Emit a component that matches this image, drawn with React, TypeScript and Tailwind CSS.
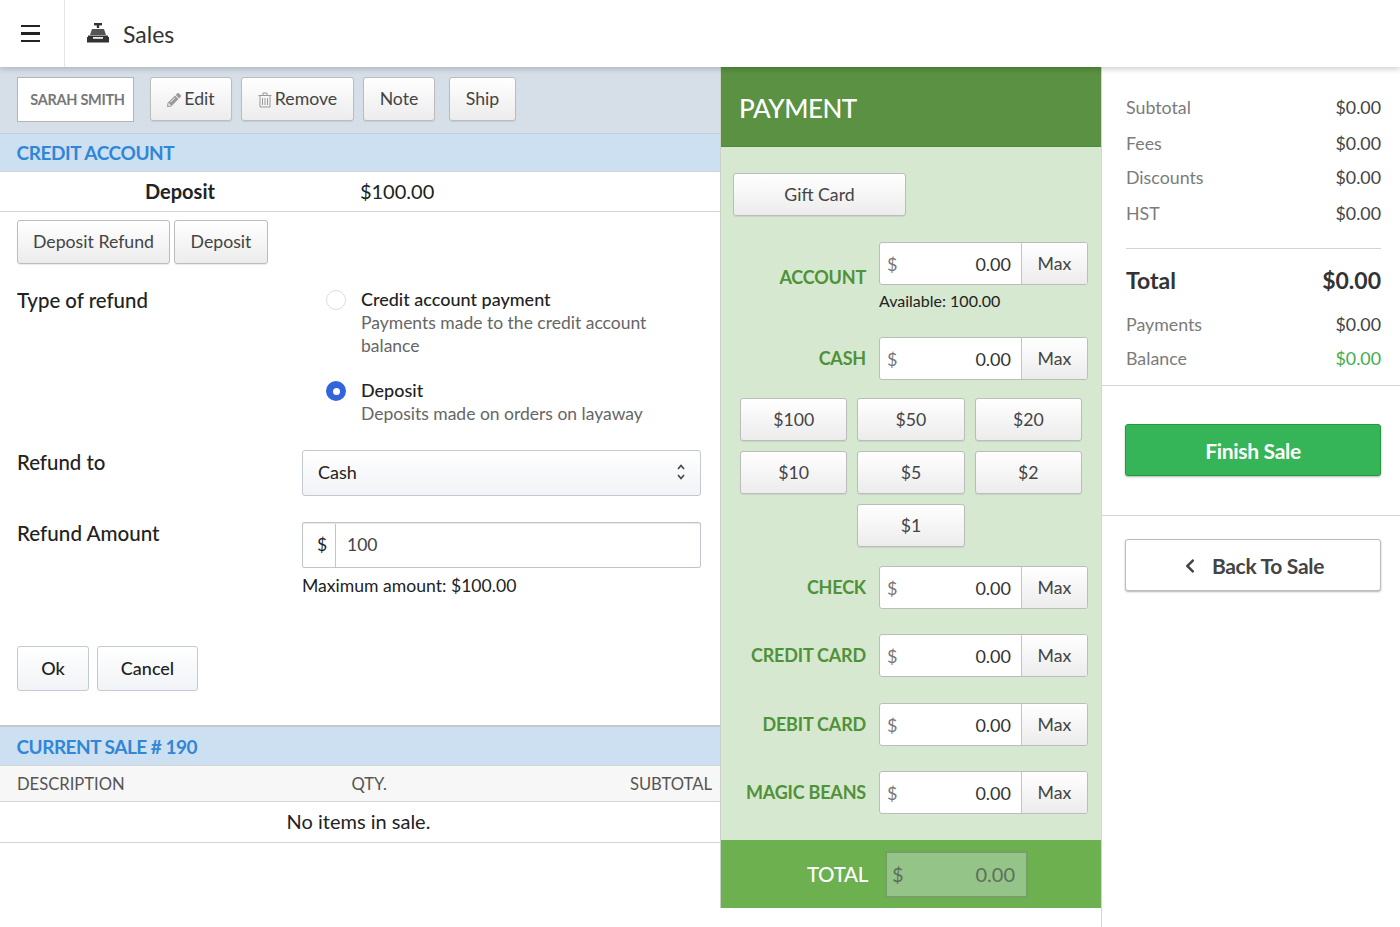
import { FaChevronLeft, FaPencilAlt } from "react-icons/fa";

const cashButtons = ["$100", "$50", "$20", "$10", "$5", "$2"];

const btn =
  "flex items-center justify-center rounded-[3px] border border-[#bcbcbc] bg-linear-to-b from-white to-[#ececec] pt-[1px] text-[17.7px] text-[#444] shadow-[0_1px_1px_rgba(0,0,0,0.08)]";

function CashRegister() {
  return (
    <svg width="22" height="20" viewBox="0 0 22 20" fill="#333">
      <rect x="7" y="0" width="8" height="2.4" />
      <rect x="9.8" y="2" width="2.4" height="3" />
      <path d="M5 6 h12 l2 6 H3 Z" fill="#555" />
      <rect x="1" y="12.5" width="20" height="1.6" />
      <path d="M0 14 h6 v1.8 h10 V14 h6 v5.5 H0 Z" />
    </svg>
  );
}

function TrashIcon() {
  return (
    <svg width="14" height="16" viewBox="0 0 14 16" fill="none" stroke="#9a9a9a" strokeWidth="1">
      <path d="M0.5 3.5 h13" />
      <path d="M5 3 V1 h4 v2" />
      <path d="M2 4 v11 h10 V4" />
      <path d="M4.5 6 v7 M7 6 v7 M9.5 6 v7" />
    </svg>
  );
}

function SectionHeader({ title, className = "" }: { title: string; className?: string }) {
  return (
    <div className={`flex items-center bg-[#cce0f2] pl-[16.5px] text-[19px] font-bold text-[#3186d6] ${className}`}>
      {title}
    </div>
  );
}

function PayInput({ label, className = "", labelClass = "" }: { label: string; className?: string; labelClass?: string }) {
  return (
    <div className={`flex items-center pr-[13px] ${className}`}>
      <div className={`w-[145px] text-right text-[18px] font-bold tracking-[-0.2px] whitespace-nowrap text-[#4f9238] ${labelClass}`}>
        {label}
      </div>
      <div className="ml-[13px] flex h-[43px] w-[209px] overflow-hidden rounded-[3px] border border-[#bcbcbc] bg-white">
        <div className="flex flex-1 items-center justify-between pt-[1px] pr-[10px] pl-[7px] text-[18px]">
          <span className="text-[#777]">$</span>
          <span className="text-[#333]">0.00</span>
        </div>
        <div className="flex w-[66px] items-center justify-center border-l border-[#c4c4c4] bg-linear-to-b from-white to-[#ececec] pt-[1px] text-[17.7px] text-[#444]">
          Max
        </div>
      </div>
    </div>
  );
}

function SummaryRow({ label, value, valueClass = "text-[#444]", className = "" }: { label: string; value: string; valueClass?: string; className?: string }) {
  return (
    <div className={`flex items-center justify-between pr-[19px] pl-[24px] text-[17.8px] ${className}`}>
      <span className="text-[#7b7b7b]">{label}</span>
      <span className={valueClass}>{value}</span>
    </div>
  );
}

export default function App() {
  return (
    <div className="h-[927px] w-[1400px] overflow-hidden bg-white font-['Lato','Liberation_Sans',sans-serif] text-[#222]">
      <header className="relative z-10 flex h-[67px] items-center bg-white shadow-[0_2px_6px_rgba(0,0,0,0.2)]">
        <div className="flex h-full w-[65px] items-center border-r border-[#e5e5e5] pl-[21px]">
          <div className="flex w-[19px] flex-col gap-[5px]">
            <div className="h-[2.5px] bg-[#222]" />
            <div className="h-[2.5px] bg-[#222]" />
            <div className="h-[2.5px] bg-[#222]" />
          </div>
        </div>
        <div className="mb-[2px] ml-[22px]">
          <CashRegister />
        </div>
        <span className="ml-[14px] pt-[2px] text-[23px] text-[#333]">Sales</span>
      </header>

      <div className="flex h-[860px]">
        {/* Left: customer + refund form */}
        <div className="w-[720px] shrink-0">
          <div className="flex h-[67px] items-start border-b border-[#c8ced4] bg-[#d6dfe8] pt-[10px] pl-[17px]">
            <div className="flex h-[45px] w-[117px] items-center justify-center border border-[#b5b5b5] bg-white pl-[4px] text-[14.5px] font-bold tracking-[-0.3px] text-[#777]">
              SARAH SMITH
            </div>
            <div className={`${btn} ml-[16px] h-[44px] w-[82px] gap-[3px]`}>
              <FaPencilAlt className="text-[14px] text-[#999]" />
              Edit
            </div>
            <div className={`${btn} ml-[9px] h-[44px] w-[113px] gap-[3px]`}>
              <TrashIcon />
              Remove
            </div>
            <div className={`${btn} ml-[9px] h-[44px] w-[72px]`}>Note</div>
            <div className={`${btn} ml-[14px] h-[44px] w-[67px]`}>Ship</div>
          </div>
          <SectionHeader title="CREDIT ACCOUNT" className="h-[37px] pt-[1px] tracking-[-0.4px]" />
          <div className="flex h-[41px] items-center border-y border-[#d4d4d4] pb-[1px] text-[20px]">
            <span className="ml-[145px] font-bold">Deposit</span>
            <span className="ml-[145px]">$100.00</span>
          </div>
          <div className="mt-[8px] ml-[17px] flex gap-[4px]">
            <div className={`${btn} h-[44px] w-[153px]`}>Deposit Refund</div>
            <div className={`${btn} h-[44px] w-[94px]`}>Deposit</div>
          </div>

          <div className="mt-[24px] flex h-[162px] pl-[17px]">
            <div className="w-[285px] text-[20.4px] leading-[24px] font-medium">Type of refund</div>
            <div className="pl-[24px]">
              <div className="flex gap-[15px]">
                <div className="mt-[2px] size-[20px] shrink-0 rounded-full border border-[#ddd] bg-white" />
                <div className="w-[300px] text-[17.5px] leading-[23px]">
                  <div className="text-[18px] font-medium">Credit account payment</div>
                  <div className="text-[#666]">Payments made to the credit account balance</div>
                </div>
              </div>
              <div className="mt-[22px] flex gap-[15px]">
                <div className="mt-[2px] flex size-[20px] shrink-0 items-center justify-center rounded-full bg-[#3264dc]">
                  <div className="size-[7px] rounded-full bg-white" />
                </div>
                <div className="text-[17.5px] leading-[23px]">
                  <div className="text-[18px] font-medium">Deposit</div>
                  <div className="whitespace-nowrap text-[#666]">Deposits made on orders on layaway</div>
                </div>
              </div>
            </div>
          </div>

          <div className="flex h-[72px] pl-[17px]">
            <div className="w-[285px] text-[20.4px] leading-[24px] font-medium">Refund to</div>
            <div className="flex h-[46px] w-[399px] items-center justify-between rounded-[3px] border border-[#c2c9d0] bg-linear-to-b from-white to-[#f1f3f6] pr-[14px] pb-[2px] pl-[15px] text-[18px]">
              Cash
              <svg width="10" height="18" viewBox="0 0 10 18" fill="none" stroke="#444" strokeWidth="1.6">
                <path d="M2 6 L5 2.5 L8 6" />
                <path d="M2 12 L5 15.5 L8 12" />
              </svg>
            </div>
          </div>

          <div className="flex pl-[17px]">
            <div className="w-[285px] text-[20.6px] leading-[22px] font-medium">Refund Amount</div>
            <div>
              <div className="flex h-[46px] w-[399px] rounded-[2px] border border-[#bfc5cb] pt-[1px] text-[17.5px] shadow-[inset_0_1px_1px_rgba(0,0,0,0.1)]">
                <div className="flex w-[33px] items-center justify-center border-r border-[#bfc5cb] pl-[6px]">$</div>
                <div className="flex items-center pl-[11px] text-[#444]">100</div>
              </div>
              <div className="mt-[6px] text-[17.6px] leading-[23px]">Maximum amount: $100.00</div>
            </div>
          </div>

          <div className="mt-[49px] ml-[17px] flex gap-[8px]">
            <div className="flex h-[45px] w-[72px] items-center justify-center rounded-[3px] border border-[#c2c9d0] bg-linear-to-b from-white to-[#f1f3f6] text-[18px] font-medium">Ok</div>
            <div className="flex h-[45px] w-[101px] items-center justify-center rounded-[3px] border border-[#c2c9d0] bg-linear-to-b from-white to-[#f1f3f6] text-[18px] font-medium">Cancel</div>
          </div>

          <div className="mt-[34px] border-t-2 border-[#c8c8c8]">
            <SectionHeader title="CURRENT SALE # 190" className="h-[38px] pt-[2px] tracking-[-0.5px]" />
          </div>
          <div className="grid h-[37px] grid-cols-[1fr_1fr_auto] items-center border-y border-[#d4d4d4] bg-[#f7f7f7] pt-[1px] pr-[8px] pl-[17px] text-[16.6px] text-[#555]">
            <span>DESCRIPTION</span>
            <span className="ml-[28px]">QTY.</span>
            <span>SUBTOTAL</span>
          </div>
          <div className="flex h-[41px] items-center justify-center border-b border-[#d4d4d4] pr-[3px] pb-[2px] text-[20px]">
            No items in sale.
          </div>
        </div>

        {/* Middle: payment */}
        <div className="w-[382px] shrink-0 border-r border-[#d4d4d4]">
          <div className="border-l border-[#c8d0c8]">
            <div className="flex h-[80px] items-center border-b border-[#4f8a38] bg-[#5a9142] pt-[3px] pl-[18px] text-[26px] font-medium tracking-[-0.5px] text-white">
              PAYMENT
            </div>
            <div className="h-[693px] bg-[#d7e8d0] pt-[26px]">
              <div className={`${btn} ml-[12px] h-[43px] w-[173px]`}>Gift Card</div>
              <PayInput label="ACCOUNT" className="mt-[26px]" labelClass="translate-y-[14px]" />
              <div className="mt-[4px] ml-[158px] text-[16px] leading-[24px]">Available: 100.00</div>
              <PayInput label="CASH" className="mt-[24px]" />
              <div className="mt-[18px] grid w-[361px] grid-cols-3 gap-[10px] pl-[19px]">
                {cashButtons.map((c) => (
                  <div key={c} className={`${btn} h-[43px]`}>
                    {c}
                  </div>
                ))}
                <div className={`${btn} col-start-2 h-[43px]`}>$1</div>
              </div>
              <PayInput label="CHECK" className="mt-[19px]" />
              <PayInput label="CREDIT CARD" className="mt-[25px]" />
              <PayInput label="DEBIT CARD" className="mt-[26px]" />
              <PayInput label="MAGIC BEANS" className="mt-[25px]" />
            </div>
            <div className="flex h-[68px] items-center bg-[#6cb04f]">
              <div className="w-[147px] text-right text-[20.5px] font-medium tracking-[-0.3px] text-white">TOTAL</div>
              <div className="ml-[17px] flex h-[47px] w-[143px] items-center justify-between border-2 border-[#769f68] bg-[#94c488] pr-[11px] pl-[5px] text-[20px] text-[#5f6f5c]">
                <span>$</span>
                <span>0.00</span>
              </div>
            </div>
          </div>
        </div>

        {/* Right: totals */}
        <div className="flex-1">
          <div className="h-[319px] border-b border-[#d4d4d4] pt-[22px]">
            <SummaryRow label="Subtotal" value="$0.00" className="h-[36px]" />
            <SummaryRow label="Fees" value="$0.00" className="mt-[1px] h-[34px]" />
            <SummaryRow label="Discounts" value="$0.00" className="h-[35px]" />
            <SummaryRow label="HST" value="$0.00" className="h-[36px]" />
            <div className="mt-[17px] mr-[19px] ml-[24px] border-t border-[#cfd5da]" />
            <div className="mt-[15px] flex h-[33px] items-center justify-between pr-[19px] pl-[24px] text-[23px] font-bold text-[#333]">
              <span>Total</span>
              <span>$0.00</span>
            </div>
            <SummaryRow label="Payments" value="$0.00" className="mt-[10px] h-[34px]" />
            <SummaryRow label="Balance" value="$0.00" valueClass="text-[#3fae4e]" className="h-[34px]" />
          </div>
          <div className="h-[130px] border-b border-[#d4d4d4] pt-[38px] pr-[19px] pl-[23px]">
            <div className="flex h-[52px] items-center justify-center rounded-[3px] border border-[#249a3c] bg-[#35b558] pt-[1px] text-[21px] font-bold tracking-[-0.3px] text-white shadow-[0_1px_2px_rgba(0,0,0,0.3)]">
              Finish Sale
            </div>
          </div>
          <div className="pt-[23px] pr-[19px] pl-[23px]">
            <div className="flex h-[52px] items-center justify-center gap-[14px] rounded-[3px] border border-[#bcbcbc] bg-white pt-[1px] text-[21px] font-bold tracking-[-0.3px] text-[#444] shadow-[0_1px_2px_rgba(0,0,0,0.3)]">
              <FaChevronLeft className="text-[16px]" />
              Back To Sale
            </div>
          </div>
        </div>
      </div>
    </div>
  );
}
